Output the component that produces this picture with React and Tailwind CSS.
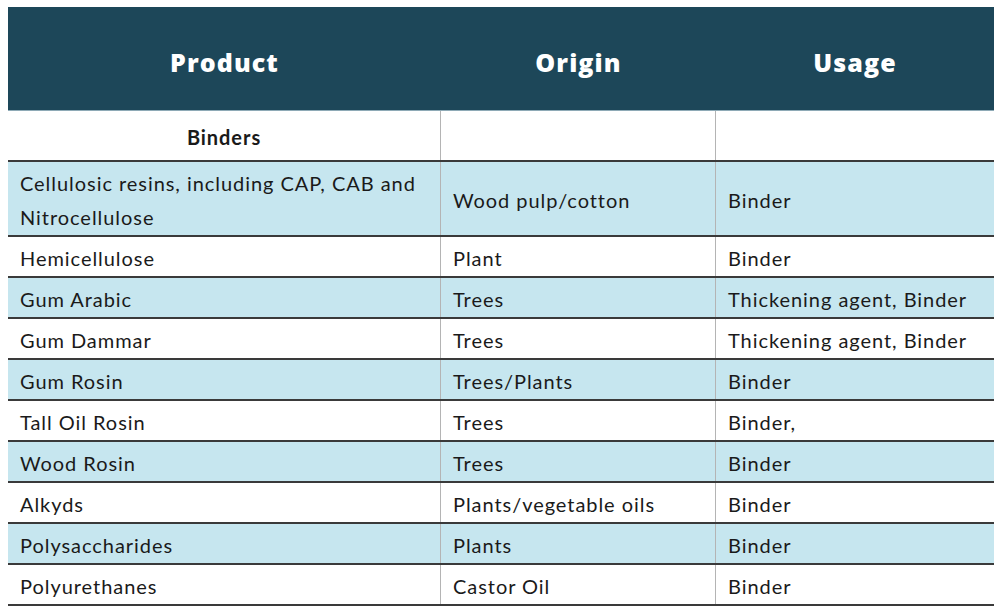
import React from "react";

const rows = [
  ["Hemicellulose", "Plant", "Binder", false],
  ["Gum Arabic", "Trees", "Thickening agent, Binder", true],
  ["Gum Dammar", "Trees", "Thickening agent, Binder", false],
  ["Gum Rosin", "Trees/Plants", "Binder", true],
  ["Tall Oil Rosin", "Trees", "Binder,", false],
  ["Wood Rosin", "Trees", "Binder", true],
  ["Alkyds", "Plants/vegetable oils", "Binder", false],
  ["Polysaccharides", "Plants", "Binder", true],
  ["Polyurethanes", "Castor Oil", "Binder", false],
];

function Row({ a, b, c, blue, h }) {
  return (
    <div
      className={`flex border-b-2 border-[#3a3a3a] ${blue ? "bg-[#c6e6ef]" : "bg-white"} ${h}`}
    >
      <div className="w-[433px] flex items-center pl-[12px] pt-[3px] border-r-[1.5px] border-[#b4b4b4]">{a}</div>
      <div className="w-[275px] flex items-center pl-[12px] pt-[3px] border-r-[1.5px] border-[#b4b4b4]">{b}</div>
      <div className="flex-1 flex items-center pl-[12px] pt-[3px]">{c}</div>
    </div>
  );
}

export default function App() {
  return (
    <div className="w-[1000px] h-[607px] bg-white pt-[7px] pl-[8px] overflow-hidden">
      <div
        className="w-[986px] text-[20px] tracking-[0.95px] text-[#1a1a1a] leading-[26px]"
        style={{ fontFamily: "Lato, 'Liberation Sans', sans-serif" }}
      >
        <div
          className="flex h-[104px] bg-[#1d4759] text-white text-[25px] tracking-[1.1px] font-extrabold border-b border-[#8eaab6]"
          style={{ fontFamily: "'Open Sans', 'Liberation Sans', sans-serif" }}
        >
          <div className="w-[433px] flex items-center justify-center pt-[6px]">Product</div>
          <div className="w-[275px] flex items-center justify-center pt-[6px]">Origin</div>
          <div className="flex-1 flex items-center justify-center pt-[6px]">Usage</div>
        </div>
        <div className="flex h-[51px] border-b-2 border-[#3a3a3a] bg-white">
          <div className="w-[433px] flex items-center justify-center pt-[3px] font-bold border-r-[1.5px] border-[#b4b4b4]">Binders</div>
          <div className="w-[275px] border-r-[1.5px] border-[#b4b4b4]"></div>
          <div className="flex-1"></div>
        </div>
        <Row
          h="h-[75px]"
          blue
          a={<span className="leading-[34px]">Cellulosic resins, including CAP, CAB and<br />Nitrocellulose</span>}
          b="Wood pulp/cotton"
          c="Binder"
        />
        {rows.map(([a, b, c, blue]) => (
          <Row key={a} h="h-[41px]" a={a} b={b} c={c} blue={blue} />
        ))}
      </div>
    </div>
  );
}
